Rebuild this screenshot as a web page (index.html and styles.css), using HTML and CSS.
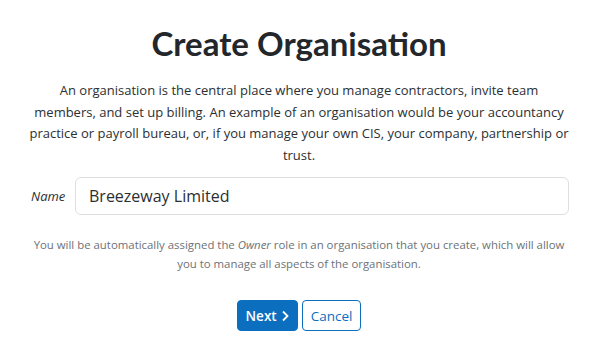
FILE: index.html
```html
<!DOCTYPE html>
<html lang="en">
<head>
    <meta charset="UTF-8">
    <meta name="viewport" content="width=device-width, initial-scale=1.0">
    <title>Create Organisation</title>
    <link rel="stylesheet" href="styles.css">
</head>
<body>
    <div class="container">
        <h1>Create Organisation</h1>
        <p class="intro">An organisation is the central place where you manage contractors, invite team members, and set up billing. An example of an organisation would be your accountancy practice or payroll bureau, or, if you manage your own CIS, your company, partnership or trust.</p>
        <div class="field">
            <label for="name">Name</label>
            <input id="name" type="text" value="Breezeway Limited">
        </div>
        <p class="note">You will be automatically assigned the <em>Owner</em> role in an organisation that you create, which will allow you to manage all aspects of the organisation.</p>
        <div class="actions">
            <button class="btn btn-primary">Next
                <svg width="8" height="12" viewBox="0 0 8 12"><path d="M2 1.5 L6.5 6 L2 10.5" fill="none" stroke="currentColor" stroke-width="1.8"/></svg>
            </button>
            <button class="btn btn-outline">Cancel</button>
        </div>
    </div>
</body>
</html>
```

FILE: styles.css
```css
body {
    margin: 0;
    font-family: "Open Sans", sans-serif;
    background-color: #ffffff;
    color: #2b2f33;
}
.container {
    width: 540px;
    margin: 0 auto;
    padding-top: 22px;
    display: flex;
    flex-direction: column;
    align-items: center;
}
h1 {
    margin: 0;
    font-family: Lato, sans-serif;
    font-weight: 700;
    font-size: 33px;
    line-height: 42px;
    color: #23272b;
}
.intro {
    margin: 16px 0 0;
    font-size: 13px;
    line-height: 21.5px;
    text-align: center;
}
.field {
    display: flex;
    align-items: center;
    align-self: stretch;
    margin-top: 11px;
    margin-left: -8px;
}
.field label {
    width: 44px;
    margin-left: 10px;
    font-style: italic;
    font-size: 13px;
}
.field input {
    flex: 1;
    height: 38px;
    box-sizing: border-box;
    border: 1px solid #dcdfe2;
    border-radius: 6px;
    padding: 0 13px;
    font-family: "Open Sans", sans-serif;
    font-size: 16px;
    color: #2b2f33;
}
.note {
    margin: 20px 0 0;
    font-size: 11.4px;
    line-height: 19px;
    color: #6c7278;
    text-align: center;
    width: 540px;
}
.actions {
    display: flex;
    gap: 4px;
    margin-top: 27px;
}
.btn {
    height: 31px;
    border-radius: 4px;
    font-family: "Open Sans", sans-serif;
    font-size: 13.5px;
    font-weight: 600;
    padding: 0 8px;
    display: flex;
    align-items: center;
    gap: 4px;
    cursor: pointer;
}
.btn-primary {
    background-color: #0b6ebf;
    border: 1px solid #0b6ebf;
    color: #ffffff;
}
.btn-outline {
    background-color: #ffffff;
    border: 1px solid #0b6ebf;
    color: #0b6ebf;
    font-weight: 400;
}
```
